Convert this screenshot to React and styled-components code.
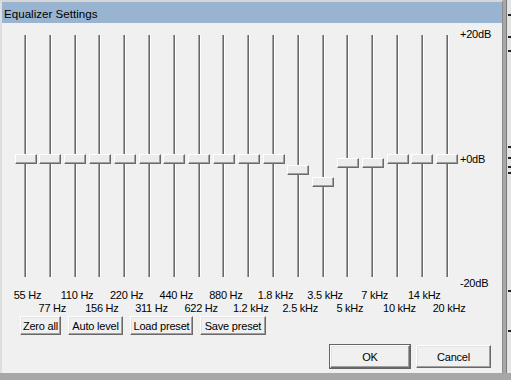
import React from 'react';
import styled, { createGlobalStyle } from 'styled-components';

const PX_PER_DB = 6.2;

const bands = [
  { label: '55 Hz', db: 0 },
  { label: '77 Hz', db: 0 },
  { label: '110 Hz', db: 0 },
  { label: '156 Hz', db: 0 },
  { label: '220 Hz', db: 0 },
  { label: '311 Hz', db: 0 },
  { label: '440 Hz', db: 0 },
  { label: '622 Hz', db: 0 },
  { label: '880 Hz', db: 0 },
  { label: '1.2 kHz', db: 0 },
  { label: '1.8 kHz', db: 0 },
  { label: '2.5 kHz', db: -1.8 },
  { label: '3.5 kHz', db: -3.7 },
  { label: '5 kHz', db: -0.65 },
  { label: '7 kHz', db: -0.65 },
  { label: '10 kHz', db: 0 },
  { label: '14 kHz', db: 0 },
  { label: '20 kHz', db: 0 },
];

const otherWindowMarks = [14, 36, 50, 146, 157, 166, 172, 290, 330];

const App = () => {
  return (
    <Screen>
      <GlobalStyle />
      <Dialog>
        <TitleBar>Equalizer Settings</TitleBar>
        <Body>
          <MainRow>
            <SliderGrid>
              {bands.map((b) => (
                <SliderColumn key={b.label}>
                  <Track />
                  <Knob style={{ top: 126 - b.db * PX_PER_DB }} />
                </SliderColumn>
              ))}
            </SliderGrid>
            <Scale>
              <ScaleLabel>+20dB</ScaleLabel>
              <ScaleLabel>+0dB</ScaleLabel>
              <ScaleLabel>-20dB</ScaleLabel>
            </Scale>
          </MainRow>
          <FreqGrid>
            {bands.map((b, i) => (
              <FreqLabel key={b.label} $col={i + 1} $row={(i % 2) + 1}>
                {b.label}
              </FreqLabel>
            ))}
          </FreqGrid>
          <ToolRow>
            <Button $w={41}>Zero all</Button>
            <Button $w={55}>Auto level</Button>
            <Button $w={63}>Load preset</Button>
            <Button $w={66}>Save preset</Button>
          </ToolRow>
          <FooterRow>
            <Button $w={80} $h={23} $default>OK</Button>
            <Button $w={75} $h={23}>Cancel</Button>
          </FooterRow>
        </Body>
      </Dialog>
      <OtherWindow>
        {otherWindowMarks.map((y) => (
          <Mark key={y} style={{ top: y }} />
        ))}
      </OtherWindow>
    </Screen>
  );
};

export default App;

// Styled Components
const GlobalStyle = createGlobalStyle`
  html, body {
    margin: 0;
    padding: 0;
  }
  body {
    width: 511px;
    height: 380px;
    overflow: hidden;
    background: #a7a7a7;
    font-family: "Liberation Sans", Arial, sans-serif;
  }
`;

const Screen = styled.div`
  display: flex;
  width: 511px;
  height: 380px;
`;

const Dialog = styled.div`
  width: 503px;
  height: 373px;
  box-sizing: border-box;
  display: flex;
  flex-direction: column;
  background: #f0f0f0;
  border-top: 2px solid #d6d6d6;
  border-left: 2px solid #dedede;
  border-right: 1px solid #8c8c8c;
`;

const TitleBar = styled.div`
  height: 21px;
  box-sizing: border-box;
  padding: 2px 0 0 2px;
  background: #99b4d1;
  color: #000;
  font-size: 11.6px;
  line-height: 19px;
  white-space: nowrap;
`;

const Body = styled.div`
  display: flex;
  flex-direction: column;
  padding: 5px 11px 0 10.6px;
`;

const MainRow = styled.div`
  display: flex;
  height: 262px;
`;

const SliderGrid = styled.div`
  display: grid;
  grid-template-columns: repeat(18, 24.8px);
`;

const SliderColumn = styled.div`
  position: relative;
  display: flex;
  justify-content: center;
  padding-top: 7px;
`;

const Track = styled.div`
  width: 1px;
  height: 242px;
  background: #6a6a6a;
  border-left: 1px solid #a0a0a0;
  border-right: 1px solid #ffffff;
  margin-left: 1px;
`;

const Knob = styled.div`
  position: absolute;
  left: 2px;
  width: 22px;
  height: 10px;
  box-sizing: border-box;
  background: #ececec;
  border: 1px solid;
  border-color: #ffffff #696969 #696969 #ffffff;
  box-shadow: inset -1px -1px 0 #a0a0a0;
`;

const Scale = styled.div`
  display: flex;
  flex-direction: column;
  justify-content: space-between;
  padding-left: 1px;
`;

const ScaleLabel = styled.span`
  font-size: 11px;
  line-height: 13px;
  letter-spacing: -0.2px;
  color: #000;
`;

const FreqGrid = styled.div`
  display: grid;
  grid-template-columns: repeat(18, 24.8px);
  grid-template-rows: 13px 13px;
  margin-top: -1px;
`;

const FreqLabel = styled.span`
  grid-column: ${(p) => p.$col};
  grid-row: ${(p) => p.$row};
  justify-self: center;
  white-space: nowrap;
  font-size: 11px;
  line-height: 13px;
  letter-spacing: -0.25px;
  color: #000;
  transform: translateX(2.5px);
`;

const ToolRow = styled.div`
  display: flex;
  gap: 7px;
  margin: 1px 0 0 7.4px;
`;

const Button = styled.button`
  width: ${(p) => p.$w}px;
  height: ${(p) => p.$h || 19}px;
  box-sizing: border-box;
  padding: 0;
  background: #f0f0f0;
  border: 1px solid;
  border-color: #ffffff #696969 #696969 #ffffff;
  box-shadow: inset -1px -1px 0 #a0a0a0, inset 1px 1px 0 #e3e3e3;
  outline: ${(p) => (p.$default ? '1px solid #646464' : 'none')};
  outline-offset: 0;
  font-family: "Liberation Sans", Arial, sans-serif;
  font-size: 11px;
  letter-spacing: -0.2px;
  color: #000;
  white-space: nowrap;
`;

const FooterRow = styled.div`
  display: flex;
  justify-content: flex-end;
  gap: 6px;
  margin-top: 10px;
`;

const OtherWindow = styled.div`
  position: relative;
  width: 5px;
  height: 373px;
  margin-left: 3px;
  background: #e4e4e4;
  border-left: 1px solid #7a7a7a;
`;

const Mark = styled.span`
  position: absolute;
  left: 1px;
  width: 3px;
  height: 2px;
  background: #222;
`;
